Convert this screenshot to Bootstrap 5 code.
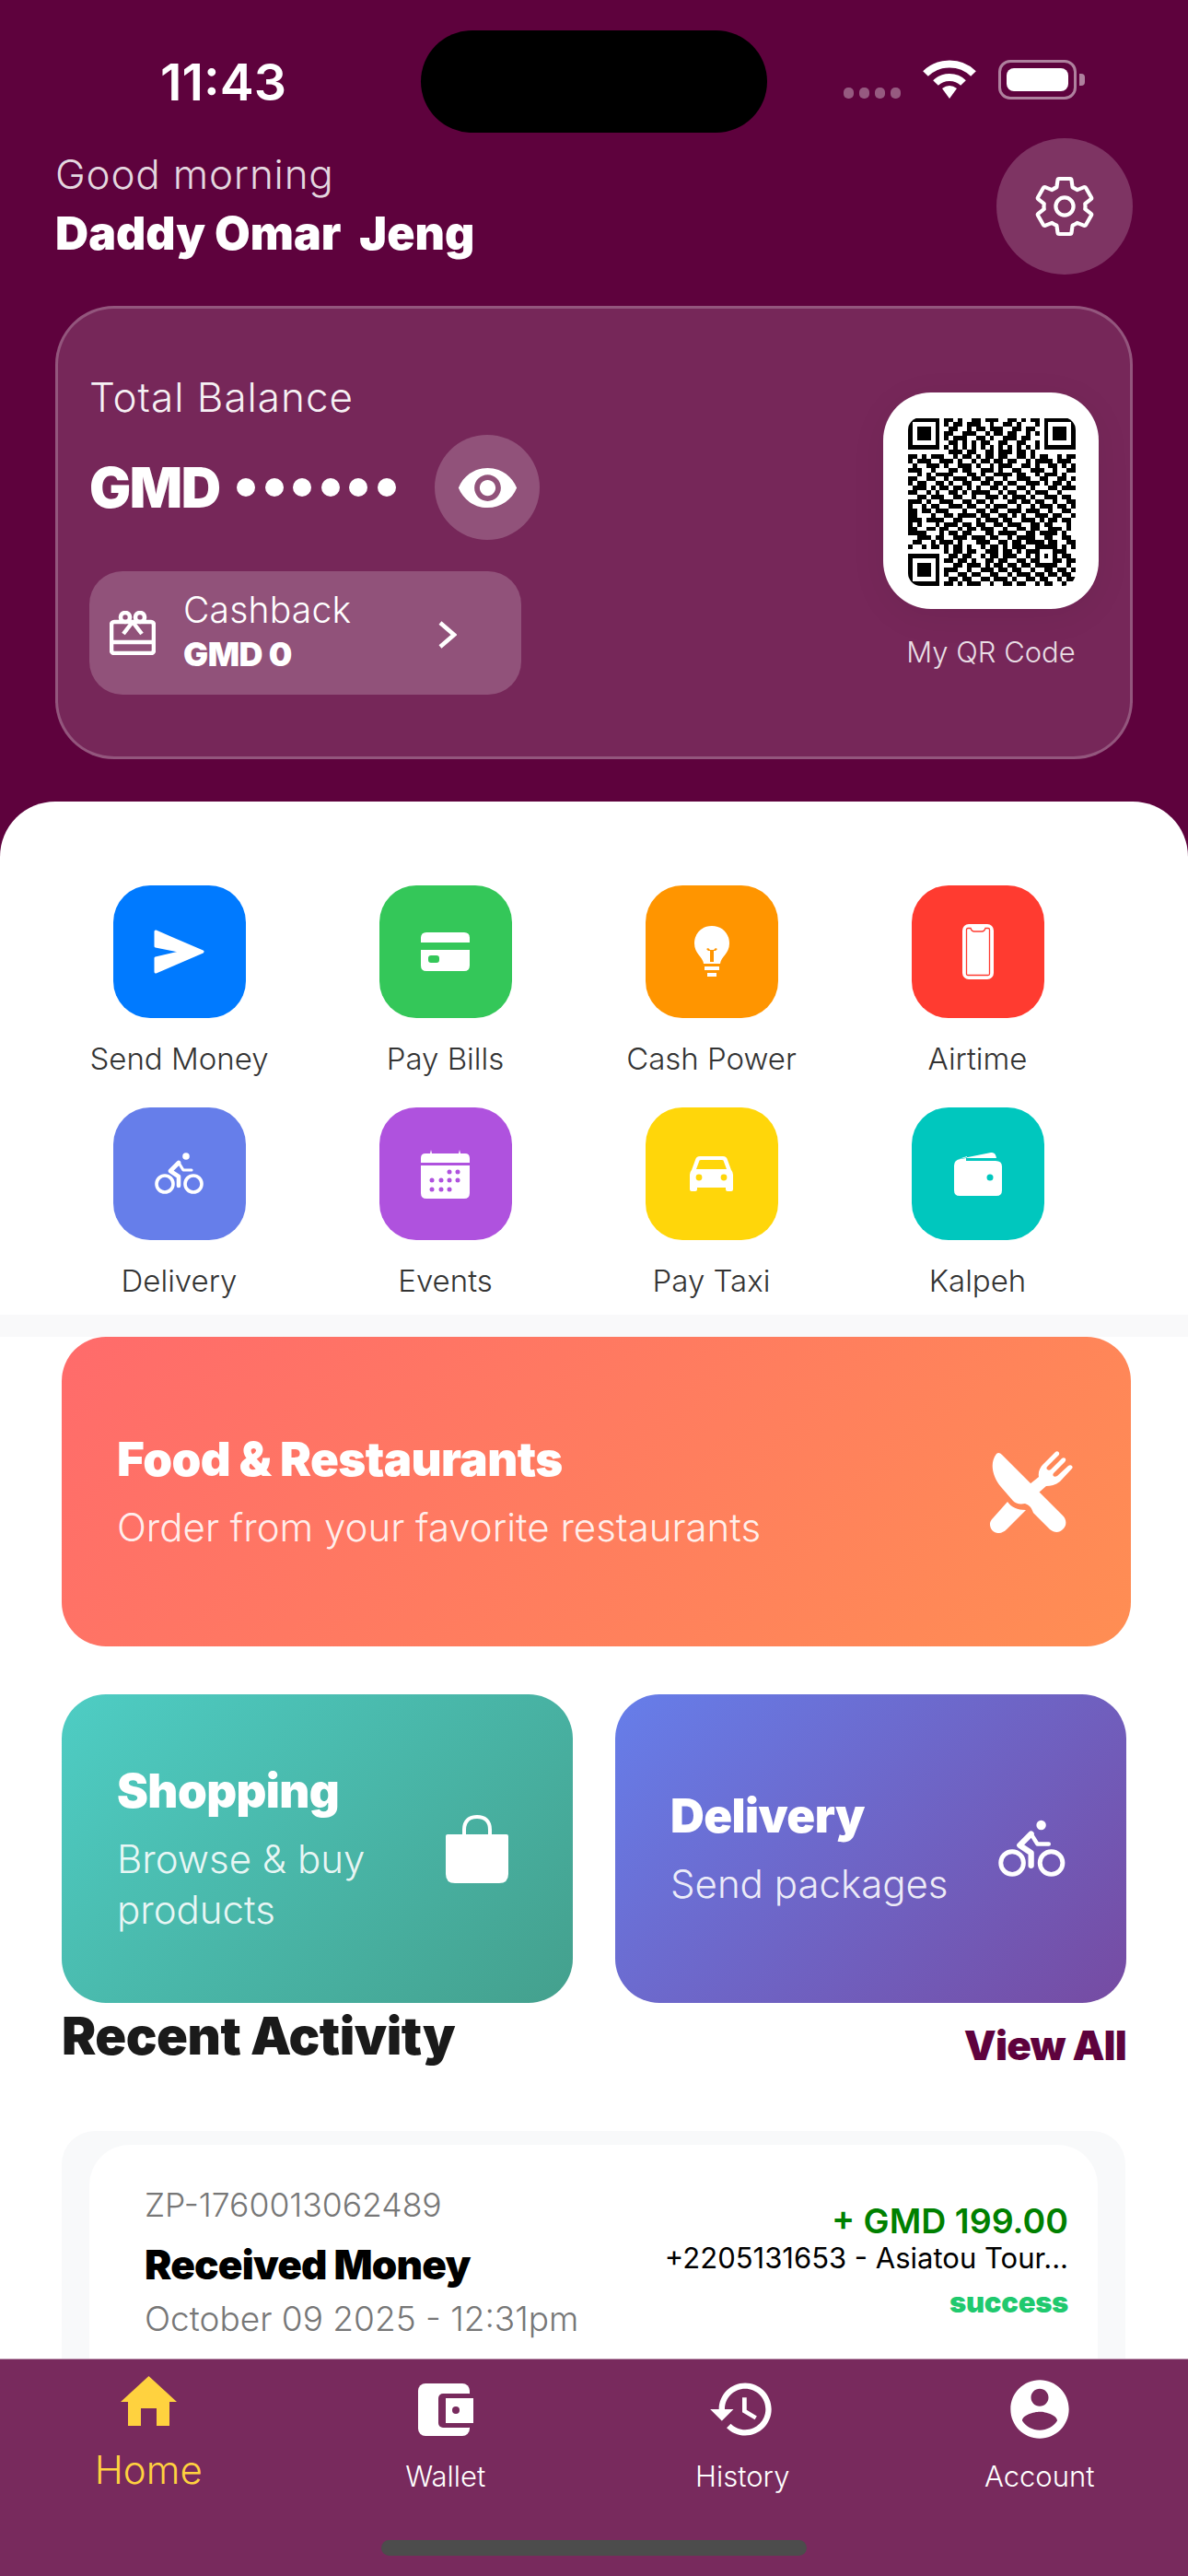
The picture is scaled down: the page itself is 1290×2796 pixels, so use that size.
<!DOCTYPE html>
<html lang="en">
  <head>
    <meta charset="utf-8" />
    <meta name="viewport" content="width=device-width, initial-scale=1" />
    <title>Wallet Home</title>
    <link href="https://cdn.jsdelivr.net/npm/bootstrap@5.3.3/dist/css/bootstrap.min.css" rel="stylesheet" />
    <style>
      body { margin: 0; background: #fff; font-family: Inter, "Liberation Sans", sans-serif; }
      svg { display: block; flex-shrink: 0; }
      .phone { position: relative; width: 1290px; height: 2796px; overflow: hidden; background: #5e023d; color: #fff; }

      /* status bar */
      .status-row { height: 144px; padding-top: 33px; }
      .clock-box { width: 457px; padding: 25px 0 0 28px; font-size: 55.5px; line-height: 62px; font-weight: 600; text-align: center; }
      .island { width: 376px; height: 111px; border-radius: 56px; background: #000; }
      .status-icons { padding: 32px 0 0 83px; gap: 24px; }
      .net-dots { gap: 6px; margin-top: 30px; }
      .net-dots span { width: 11px; height: 12px; border-radius: 5px; background: rgba(255,255,255,.35); }
      .batt { position: relative; width: 85px; height: 43px; padding: 6px; border: 3px solid rgba(255,255,255,.5); border-radius: 13px; }
      .batt span { display: block; height: 100%; background: #fff; border-radius: 8px; }
      .batt::after { content: ""; position: absolute; right: -12px; top: 12px; width: 6px; height: 13px; border-radius: 0 4px 4px 0; background: rgba(255,255,255,.5); }

      /* greeting */
      .greet-row { padding: 6px 60px 0; height: 188px; }
      .greet-text { padding-top: 14px; }
      .greet-hi { font-size: 44px; line-height: 50px; font-weight: 300; letter-spacing: .8px; color: rgba(255,255,255,.85); }
      .greet-name { margin-top: 11px; font-size: 50px; line-height: 56px; font-weight: 900; white-space: pre; }
      .gear-btn { width: 148px; height: 148px; border-radius: 50%; background: rgba(255,255,255,.2); }

      /* balance card */
      .balance-card { width: 1170px; height: 492px; margin-left: 60px; padding: 70px 34px 0; border: 3px solid rgba(255,255,255,.22); border-radius: 64px; background: rgba(255,255,255,.15); }
      .bal-label { font-size: 44px; line-height: 52px; font-weight: 300; letter-spacing: 1px; color: rgba(255,255,255,.95); }
      .bal-row { margin-top: 15px; height: 114px; }
      .bal-cur { font-size: 60px; font-weight: 900; letter-spacing: -1.5px; width: 160px; }
      .bal-dots { gap: 10.6px; width: 215px; }
      .bal-dots span { width: 20px; height: 20px; border-radius: 50%; background: #fff; }
      .eye-btn { width: 114px; height: 114px; border-radius: 50%; background: rgba(255,255,255,.2); }
      .cash-box { width: 469px; height: 134px; margin-top: 34px; padding-left: 22px; border-radius: 36px; background: rgba(255,255,255,.2); }
      .cash-text { width: 277px; margin-left: 30px; }
      .cash-label { margin-top: -2px; font-size: 39px; line-height: 48px; font-weight: 300; letter-spacing: .2px; }
      .cash-val { font-size: 36px; line-height: 48px; font-weight: 900; letter-spacing: -.5px; }
      .cash-go { margin-top: 4px; }
      .qr-col { width: 234px; margin-top: 21px; text-align: center; }
      .qr-tile { height: 235px; padding: 27px; border-radius: 52px; background: #fff; box-shadow: 0 8px 40px rgba(0,0,0,.06); }
      .qr-tile svg { border-radius: 14px; }
      .qr-label { margin-top: 27px; font-size: 31px; line-height: 40px; font-weight: 300; color: rgba(255,255,255,.85); }

      /* white sheet */
      .sheet { height: 1926px; margin-top: 46px; padding-top: 91px; border-radius: 60px 60px 0 0; background: #fff; color: #333; }
      .service-grid { width: 1156px; margin-left: 50px; height: 466px; }
      .service-item { height: 241px; text-align: center; }
      .service-tile { width: 144px; height: 144px; margin: 0 auto; border-radius: 40px; display: flex; align-items: center; justify-content: center; }
      .service-name { margin-top: 22px; font-size: 33px; line-height: 44px; font-weight: 350; }
      .t-blue { background: #007aff; } .t-green { background: #34c759; } .t-orange { background: #ff9500; } .t-red { background: #ff3b30; }
      .t-indigo { background: #667eea; } .t-purple { background: #af52de; } .t-yellow { background: #ffd60a; } .t-teal { background: #00c7be; }
      .grey-band { height: 24px; background: #f9f9fa; }

      /* promo cards */
      .promo { border-radius: 48px; color: #fff; }
      .promo-wide { width: 1161px; height: 336px; margin-left: 67px; padding: 0 63px 0 60px; background: linear-gradient(135deg, #ff6b6b, #ff8e53); }
      .promo-pair { margin: 52px 0 0 67px; gap: 46px; }
      .promo-half { width: 555px; height: 335px; padding-left: 60px; }
      .g-teal { padding-right: 70px; background: linear-gradient(135deg, #4ecdc4, #44a08d); }
      .g-violet { padding-right: 65px; background: linear-gradient(135deg, #667eea, #764ba2); }
      .promo-title { font-size: 51px; line-height: 60px; font-weight: 900; letter-spacing: -.6px; }
      .promo-sub { margin-top: 16px; font-size: 42px; line-height: 55px; font-weight: 300; color: rgba(255,255,255,.9); }

      /* recent activity */
      .recent-head { width: 1156px; margin-left: 67px; height: 139px; }
      .recent-title { margin-top: -2px; font-size: 56px; line-height: 76px; font-weight: 900; color: #1a1a1a; letter-spacing: -.5px; }
      .view-all { margin-top: 13px; font-size: 44px; line-height: 66px; font-weight: 900; color: #5e023d; letter-spacing: -.8px; text-decoration: none; }
      .recent-panel { width: 1155px; margin-left: 67px; padding: 15px 30px 0; border-radius: 36px; background: #f8f9fa; height: 300px; }
      .tx-card { height: 300px; padding: 44px 32px 0 60px; border-radius: 44px; background: #fff; }
      .tx-ref { font-size: 35.5px; line-height: 44px; font-weight: 300; color: #777; }
      .tx-title { margin-top: 14px; font-size: 44px; line-height: 56px; font-weight: 900; color: #000; letter-spacing: -.8px; }
      .tx-date { margin-top: 3px; font-size: 37px; line-height: 56px; font-weight: 300; color: #777; }
      .tx-right { padding-top: 17px; text-align: right; }
      .tx-amt { font-size: 37.5px; line-height: 44px; font-weight: 600; color: #008000; }
      .tx-who { font-size: 31px; line-height: 36px; font-weight: 400; color: #000; }
      .tx-state { margin-top: 10px; font-size: 31px; line-height: 40px; font-weight: 900; color: #1fc96e; letter-spacing: -.3px; }

      /* bottom nav */
      .tabbar { position: absolute; left: 0; right: 0; bottom: 0; height: 236px; background: #782a5d; border-top: 1px solid rgba(255,255,255,.5); }
      .tab-item { height: 180px; display: flex; flex-direction: column; align-items: center; color: #fff; text-decoration: none; }
      .tab-icon { height: 78px; margin-top: 15px; display: flex; align-items: center; }
      .tab-name { margin-top: 14px; font-size: 31px; line-height: 40px; font-weight: 300; }
      .tab-item.is-on { color: #ffd23f; }
      .tab-item.is-on .tab-icon { margin-top: 6px; }
      .tab-item.is-on .tab-name { margin-top: 11px; font-size: 42px; line-height: 50px; }
      .home-bar { position: absolute; left: 414px; top: 196px; width: 462px; height: 17px; border-radius: 9px; background: #4c4c4c; }
    </style>
  </head>
  <body>
    <div class="phone">
      <div class="status-row d-flex">
        <div class="clock-box">11:43</div>
        <div class="island"></div>
        <div class="status-icons d-flex">
          <div class="net-dots d-flex"><span></span><span></span><span></span><span></span></div>
          <svg width="58" height="42" viewBox="0 0 58 42" fill="none" stroke="#fff" stroke-width="8">
            <path d="M3 15 C17 1 41 1 55 15" />
            <path d="M14 25 C22 17 36 17 44 25" />
            <path d="M21 31 Q29 25 37 31 L29 42 Z" fill="#fff" stroke="none" />
          </svg>
          <div class="batt"><span></span></div>
        </div>
      </div>

      <div class="greet-row d-flex justify-content-between">
        <div class="greet-text">
          <div class="greet-hi">Good morning</div>
          <div class="greet-name">Daddy Omar  Jeng</div>
        </div>
        <div class="gear-btn d-flex align-items-center justify-content-center">
          <svg width="72" height="72" viewBox="0 0 24 24" fill="none" stroke="#fff" stroke-width="1.4" stroke-linejoin="round">
            <path d="M19.43 12.98c.04-.32.07-.64.07-.98 0-.34-.03-.66-.07-.98l2.11-1.65c.19-.15.24-.42.12-.64l-2-3.46c-.09-.16-.26-.25-.44-.25-.06 0-.12.01-.17.03l-2.49 1c-.52-.4-1.08-.73-1.69-.98l-.38-2.65C14.46 2.18 14.25 2 14 2h-4c-.25 0-.46.18-.49.42l-.38 2.65c-.61.25-1.17.59-1.69.98l-2.49-1c-.06-.02-.12-.03-.18-.03-.17 0-.34.09-.43.25l-2 3.46c-.13.22-.07.49.12.64l2.11 1.65c-.04.32-.07.65-.07.98 0 .33.03.66.07.98l-2.11 1.65c-.19.15-.24.42-.12.64l2 3.46c.09.16.26.25.44.25.06 0 .12-.01.17-.03l2.49-1c.52.4 1.08.73 1.69.98l.38 2.65c.03.24.24.42.49.42h4c.25 0 .46-.18.49-.42l.38-2.65c.61-.25 1.17-.59 1.69-.98l2.49 1c.06.02.12.03.18.03.17 0 .34-.09.43-.25l2-3.46c.12-.22.07-.49-.12-.64l-2.11-1.65z" />
            <circle cx="12" cy="12" r="3.2" />
          </svg>
        </div>
      </div>

      <div class="balance-card d-flex justify-content-between">
        <div>
          <div class="bal-label">Total Balance</div>
          <div class="bal-row d-flex align-items-center">
            <div class="bal-cur">GMD</div>
            <div class="bal-dots d-flex"><span></span><span></span><span></span><span></span><span></span><span></span></div>
            <div class="eye-btn d-flex align-items-center justify-content-center">
              <svg width="69" height="69" viewBox="0 0 24 24" fill="#fff"><path d="M12 4.5C7 4.5 2.73 7.61 1 12c1.73 4.39 6 7.5 11 7.5s9.27-3.11 11-7.5c-1.73-4.39-6-7.5-11-7.5zM12 17c-2.76 0-5-2.24-5-5s2.24-5 5-5 5 2.24 5 5-2.24 5-5 5zm0-8c-1.66 0-3 1.34-3 3s1.34 3 3 3 3-1.34 3-3-1.34-3-3-3z" /></svg>
            </div>
          </div>
          <div class="cash-box d-flex align-items-center">
            <svg width="50" height="48" viewBox="0 0 50 48" fill="none" stroke="#fff" stroke-width="4.6">
              <rect x="2" y="12" width="46" height="34" rx="3" />
              <path d="M2 34 H48" />
              <circle cx="17" cy="7" r="5" />
              <circle cx="33" cy="7" r="5" />
              <path d="M25 12 L15 25 M25 12 L35 25" stroke-width="4.5" />
            </svg>
            <div class="cash-text">
              <div class="cash-label">Cashback</div>
              <div class="cash-val">GMD 0</div>
            </div>
            <svg class="cash-go" width="20" height="30" viewBox="0 0 20 30" fill="none" stroke="#fff" stroke-width="4.5"><path d="M2 2 L17 15 L2 28" /></svg>
          </div>
        </div>
        <div class="qr-col">
          <div class="qr-tile">
            <svg id="qr" width="182" height="183" viewBox="0 0 37 37" shape-rendering="crispEdges"></svg>
          </div>
          <div class="qr-label">My QR Code</div>
        </div>
      </div>

      <div class="sheet">
        <div class="service-grid row g-0">
          <div class="col-3 service-item">
            <div class="service-tile t-blue">
              <svg width="56" height="48" viewBox="0 0 56 48"><path d="M2 2 L53 24 L2 46 V31 L32 24 L2 18 Z" fill="#fff" stroke="#fff" stroke-width="3" stroke-linejoin="round" /></svg>
            </div>
            <div class="service-name">Send Money</div>
          </div>
          <div class="col-3 service-item">
            <div class="service-tile t-green">
              <svg width="53" height="42" viewBox="0 0 53 42" fill="#fff">
                <path d="M0 11 V6 Q0 0 6 0 H47 Q53 0 53 6 V11 Z" />
                <path fill-rule="evenodd" d="M0 19 H53 V36 Q53 42 47 42 H6 Q0 42 0 36 Z M14 25 H11 Q8 25 8 28 V30 Q8 33 11 33 H17 Q20 33 20 30 V28 Q20 25 17 25 Z" />
              </svg>
            </div>
            <div class="service-name">Pay Bills</div>
          </div>
          <div class="col-3 service-item">
            <div class="service-tile t-orange">
              <svg width="38" height="57" viewBox="0 0 38 57" fill="#fff">
                <path fill-rule="evenodd" d="M19 0 C8 0 0 8 0 19 C0 30 9 33 10 41 H28 C29 33 38 30 38 19 C38 8 30 0 19 0 Z M13 25 L15 27 L17 27 V39 H21 V27 L23 27 L25 25 L23 24 L21 26 H17 L15 24 Z" />
                <rect x="11" y="44" width="16" height="4" />
                <rect x="14" y="51" width="10" height="4" />
              </svg>
            </div>
            <div class="service-name">Cash Power</div>
          </div>
          <div class="col-3 service-item">
            <div class="service-tile t-red">
              <svg width="34" height="60" viewBox="0 0 34 60">
                <rect width="34" height="60" rx="7" fill="#fff" />
                <path d="M6 4.5 H9 Q10 8 13 8 H21 Q24 8 25 4.5 H28 Q29.5 4.5 29.5 6 V54 Q29.5 55.5 28 55.5 H6 Q4.5 55.5 4.5 54 V6 Q4.5 4.5 6 4.5 Z" fill="#fff" stroke="#ff3b30" stroke-width="1.3" />
              </svg>
            </div>
            <div class="service-name">Airtime</div>
          </div>
          <div class="col-3 service-item">
            <div class="service-tile t-indigo">
              <svg width="54" height="46" viewBox="0 0 54 46" fill="none" stroke="#fff" stroke-width="3.6" stroke-linecap="round" stroke-linejoin="round">
                <circle cx="11" cy="34" r="9" />
                <circle cx="42" cy="34" r="9" />
                <circle cx="34" cy="4" r="3.8" fill="#fff" stroke="none" />
                <path d="M26 11 L17 20 L26 26 V36" stroke-width="4.6" />
                <path d="M26 11 L31 19 H40" stroke-width="3.2" />
              </svg>
            </div>
            <div class="service-name">Delivery</div>
          </div>
          <div class="col-3 service-item">
            <div class="service-tile t-purple">
              <svg width="53" height="53" viewBox="0 0 53 53" fill="#fff">
                <path d="M0 14 V9 Q0 4 5 4 H10 L11 0 L12 4 H41 L42 0 L43 4 H48 Q53 4 53 9 V14 Z" />
                <path d="M0 17 H53 V47 Q53 53 47 53 H6 Q0 53 0 47 Z" />
                <g fill="#af52de">
                  <circle cx="31" cy="24" r="2.5" /><circle cx="40" cy="24" r="2.5" />
                  <circle cx="12" cy="33" r="2.5" /><circle cx="22" cy="33" r="2.5" /><circle cx="31" cy="33" r="2.5" /><circle cx="40" cy="33" r="2.5" />
                  <circle cx="12" cy="43" r="2.5" /><circle cx="22" cy="43" r="2.5" /><circle cx="31" cy="43" r="2.5" />
                </g>
              </svg>
            </div>
            <div class="service-name">Events</div>
          </div>
          <div class="col-3 service-item">
            <div class="service-tile t-yellow">
              <svg width="47" height="38" viewBox="0 0 47 38">
                <path fill="#fff" fill-rule="evenodd" d="M11 0 H36 Q40 0 41 4 L45 15 Q47 17 47 20 V36 Q47 38 45 38 H41 Q39 38 39 36 V34 H8 V36 Q8 38 6 38 H2 Q0 38 0 36 V20 Q0 17 2 15 L6 4 Q7 0 11 0 Z M12 4 Q10 4 10 6 L7 14 H40 L37 6 Q37 4 35 4 Z" />
                <circle cx="10" cy="23" r="3.4" fill="#ffd60a" /><circle cx="37" cy="23" r="3.4" fill="#ffd60a" />
              </svg>
            </div>
            <div class="service-name">Pay Taxi</div>
          </div>
          <div class="col-3 service-item">
            <div class="service-tile t-teal">
              <svg width="52" height="48" viewBox="0 0 52 48">
                <path fill="#fff" d="M5 8 L40 1 Q45 0 46 7 H14 V5 Z" />
                <path fill="#fff" d="M0 15 Q0 9 7 8 L13 7 V10 H45 Q52 10 52 16 V42 Q52 48 46 48 H6 Q0 48 0 42 Z" />
                <circle cx="39" cy="28" r="3.5" fill="#00c7be" />
              </svg>
            </div>
            <div class="service-name">Kalpeh</div>
          </div>
        </div>
        <div class="grey-band"></div>

        <div class="promo promo-wide d-flex align-items-center justify-content-between">
          <div>
            <div class="promo-title">Food &amp; Restaurants</div>
            <div class="promo-sub">Order from your favorite restaurants</div>
          </div>
          <svg width="90" height="90" viewBox="0 0 90 90" fill="#fff">
            <path d="M7 4 C9 2 11 3 13 5 L79 71 C84 76 83 83 79 86 C75 90 70 90 65 86 L47 68 C45 62 43 60 38 58 C32 59 28 58 25 55 L12 40 C3 30 -1 14 7 4 Z" />
            <path d="M19 56 C23 62 30 65 39 65 L18 86 C12 92 4 91 1 85 C-1 80 0 77 3 74 Z" />
            <path d="M43 37 L53 29 C52 24 54 19 58 15 L71 2 C73 0 76 2 75 5 L62 18 C60 21 64 23 66 21 L78 9 C81 7 84 10 81 13 L69 25 C67 28 70 30 73 28 L85 17 C88 15 91 18 89 20 L76 34 C71 38 66 39 61 39 L53 46 Z" />
          </svg>
        </div>

        <div class="promo-pair d-flex">
          <div class="promo promo-half g-teal d-flex align-items-center justify-content-between">
            <div>
              <div class="promo-title">Shopping</div>
              <div class="promo-sub">Browse &amp; buy<br />products</div>
            </div>
            <svg width="68" height="74" viewBox="0 0 68 74" fill="#fff">
              <path d="M20 24 V16 C20 6 26 2 34 2 C42 2 48 6 48 16 V24" fill="none" stroke="#fff" stroke-width="4" />
              <path d="M2 21 H66 Q68 21 68 23 V64 Q68 74 58 74 H10 Q0 74 0 64 V23 Q0 21 2 21 Z" />
            </svg>
          </div>
          <div class="promo promo-half g-violet d-flex align-items-center justify-content-between">
            <div>
              <div class="promo-title">Delivery</div>
              <div class="promo-sub">Send packages</div>
            </div>
            <svg width="74" height="64" viewBox="0 0 54 46" fill="none" stroke="#fff" stroke-width="3.6" stroke-linecap="round" stroke-linejoin="round">
              <circle cx="11" cy="34" r="9" />
              <circle cx="42" cy="34" r="9" />
              <circle cx="34" cy="4" r="3.8" fill="#fff" stroke="none" />
              <path d="M26 11 L17 20 L26 26 V36" stroke-width="4.6" />
              <path d="M26 11 L31 19 H40" stroke-width="3.2" />
            </svg>
          </div>
        </div>

        <div class="recent-head d-flex justify-content-between">
          <div class="recent-title">Recent Activity</div>
          <a class="view-all" href="#">View All</a>
        </div>
        <div class="recent-panel">
          <div class="tx-card d-flex justify-content-between">
            <div>
              <div class="tx-ref">ZP-1760013062489</div>
              <div class="tx-title">Received Money</div>
              <div class="tx-date">October 09 2025 - 12:31pm</div>
            </div>
            <div class="tx-right">
              <div class="tx-amt">+ GMD 199.00</div>
              <div class="tx-who">+2205131653 - Asiatou Tour...</div>
              <div class="tx-state">success</div>
            </div>
          </div>
        </div>
      </div>

      <div class="tabbar">
        <div class="row g-0">
          <div class="col-3">
            <a class="tab-item is-on" href="#">
              <div class="tab-icon">
                <svg width="61" height="54" viewBox="0 0 61 54" fill="#ffd23f"><path fill-rule="evenodd" d="M30.5 0 L61 28 H53 V54 H39 V35 H22 V54 H8 V28 H0 Z" /></svg>
              </div>
              <div class="tab-name">Home</div>
            </a>
          </div>
          <div class="col-3">
            <a class="tab-item" href="#">
              <div class="tab-icon">
                <svg width="60" height="57" viewBox="0 0 60 57">
                  <rect width="56" height="57" rx="8" fill="#fff" />
                  <rect x="22" y="11" width="38" height="37" rx="5" fill="#782a5d" />
                  <rect x="30" y="16" width="30" height="27" fill="#fff" />
                  <circle cx="41" cy="29" r="4" fill="#782a5d" />
                </svg>
              </div>
              <div class="tab-name">Wallet</div>
            </a>
          </div>
          <div class="col-3">
            <a class="tab-item" href="#">
              <div class="tab-icon">
                <svg width="76" height="76" viewBox="0 0 24 24" fill="#fff"><path d="M13 3c-4.97 0-9 4.03-9 9H1l3.89 3.89.07.14L9 12H6c0-3.87 3.13-7 7-7s7 3.13 7 7-3.13 7-7 7c-1.93 0-3.68-.79-4.94-2.06l-1.42 1.42C8.27 19.99 10.51 21 13 21c4.97 0 9-4.03 9-9s-4.03-9-9-9zm-1 5v5l4.28 2.54.72-1.21-3.5-2.08V8H12z" /></svg>
              </div>
              <div class="tab-name">History</div>
            </a>
          </div>
          <div class="col-3">
            <a class="tab-item" href="#">
              <div class="tab-icon">
                <svg width="76" height="76" viewBox="0 0 24 24" fill="#fff"><path d="M12 2C6.48 2 2 6.48 2 12s4.48 10 10 10 10-4.48 10-10S17.52 2 12 2zm0 3c1.66 0 3 1.34 3 3s-1.34 3-3 3-3-1.34-3-3 1.34-3 3-3zm0 14.2c-2.5 0-4.71-1.28-6-3.22.03-1.99 4-3.08 6-3.08 1.99 0 5.97 1.09 6 3.08-1.29 1.94-3.5 3.22-6 3.22z" /></svg>
              </div>
              <div class="tab-name">Account</div>
            </a>
          </div>
        </div>
        <div class="home-bar"></div>
      </div>
    </div>

    <script src="https://cdn.jsdelivr.net/npm/bootstrap@5.3.3/dist/js/bootstrap.bundle.min.js"></script>
    <script>
      // QR modules, one string per row
      const qrRows = [
        "1111111" + "01101001101110011010110" + "1111111",
        "1000001" + "01011011100100110100010" + "1000001",
        "1011101" + "00110010110111001101100" + "1011101",
        "1011101" + "01100111001011011001010" + "1011101",
        "1011101" + "01011100110100111011000" + "1011101",
        "1000001" + "00110101011001100110010" + "1000001",
        "1111111" + "01010101010101010101010" + "1111111",
        "0000000" + "00111011001101110110100" + "0000000",
        "1101011100101101011011001101011001011",
        "1011100111010010110110110010111101110",
        "0100111010011101001011100110100110101",
        "1110010001101100111010011001110010011",
        "0010101111000110100111101100101110100",
        "1100110010111011011001001110011001101",
        "1011001101001100110110110011101011010",
        "0111010110110101001101001101000110111",
        "1100101001101011110010110010111001000",
        "0011011100110010011101011101001110110",
        "1110100111001101101000110110110010011",
        "1001011001110110010111001001011101101",
        "1101101110001001101100111011100100110",
        "1100010011011110110011010100111011001",
        "1110111100110001011101100111010110110",
        "1010001011101101100110111001101100010",
        "1100110110010110111001001101100111010",
        "1111000101101100011011110011011110100",
        "0011101100111011101100101111001100110",
        "0110010111010001110011011011110110011",
        "1001011010110100101101011100" + "11111" + "0101",
        "00000000" + "10110110011101101011" + "10001" + "1100",
        "1111111" + "0" + "01101100101101110010" + "10101" + "0110",
        "1000001" + "0" + "11011010011011001101" + "10001" + "1011",
        "1011101" + "0" + "00110111010110110110" + "11111" + "0010",
        "1011101" + "0" + "11100100111011011001" + "00110" + "1101",
        "1011101" + "0" + "10011011001100101110" + "11011" + "0110",
        "1000001" + "0" + "01101100110111010011" + "01100" + "1011",
        "1111111" + "0" + "11010111001001101100" + "10110" + "0100",
      ];
      let d = "";
      qrRows.forEach((row, y) => {
        [...row].forEach((cell, x) => {
          if (cell === "1") d += `M${x} ${y}h1v1h-1z`;
        });
      });
      document.getElementById("qr").innerHTML = `<path d="${d}" fill="#000"/>`;
    </script>
  </body>
</html>
